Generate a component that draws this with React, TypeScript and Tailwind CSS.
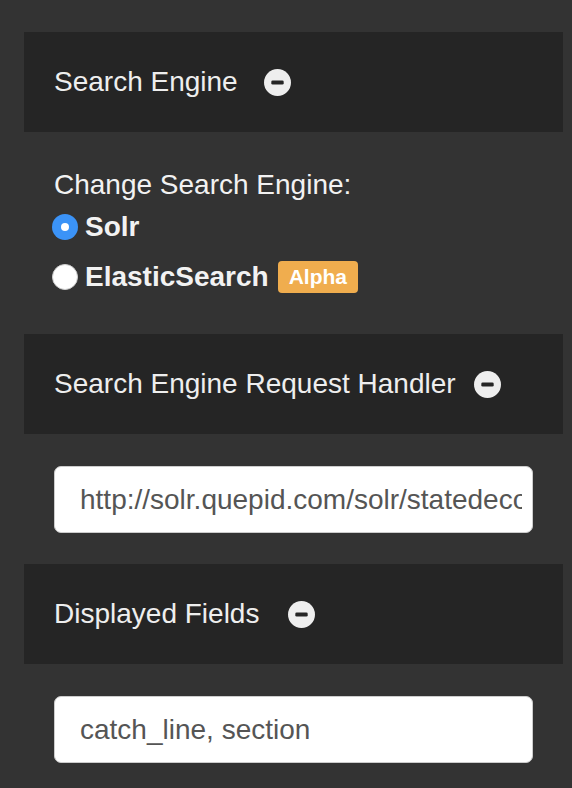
import React from 'react';

function MinusCircle() {
  return (
    <svg width="27" height="27" viewBox="0 0 24 24" className="shrink-0">
      <circle cx="12" cy="12" r="12" fill="#eeeeee" />
      <rect x="6.5" y="10.2" width="11" height="3.6" rx="1.2" fill="#252525" />
    </svg>
  );
}

function PanelHeader({ title, gap }: { title: string; gap: string }) {
  return (
    <div className="h-[100px] bg-[#252525] pl-[30px] flex items-center">
      <span className="text-[28px] text-[#eeeeee]">{title}</span>
      <span className={gap}>
        <MinusCircle />
      </span>
    </div>
  );
}

function Radio({ checked }: { checked: boolean }) {
  if (checked) {
    return (
      <span className="w-[26px] h-[26px] rounded-full bg-[#3b93f7] flex items-center justify-center shrink-0">
        <span className="w-[8px] h-[8px] rounded-full bg-white" />
      </span>
    );
  }
  return <span className="w-[26px] h-[26px] rounded-full bg-white border border-[#cfcfcf] shrink-0" />;
}

function TextField({ value }: { value: string }) {
  return (
    <input
      type="text"
      readOnly
      value={value}
      className="block w-full h-[67px] rounded-[7px] bg-white border border-[#cccccc] pl-[25px] pr-[10px] text-[28px] text-[#555555] outline-none"
      style={{ fontFamily: '"Liberation Sans", Arial, sans-serif' }}
    />
  );
}

export default function App() {
  const [engine, setEngine] = React.useState('solr');

  return (
    <div
      className="min-h-[788px] w-[572px] bg-[#333333] pt-[32px] pl-[24px] pr-[9px] overflow-hidden"
      style={{ fontFamily: '"Liberation Sans", Arial, sans-serif' }}
    >
      <PanelHeader title="Search Engine" gap="ml-[26px]" />
      <div className="pl-[30px] pr-[30px] pt-[38px] pb-[41px] text-[#f2f2f2]">
        <div className="text-[28px] leading-[30px]">Change Search Engine:</div>
        <label className="flex items-center -ml-[2px] mt-[12px] h-[30px] cursor-pointer" onClick={() => setEngine('solr')}>
          <Radio checked={engine === 'solr'} />
          <span className="ml-[7px] text-[28px] font-bold">Solr</span>
        </label>
        <label className="flex items-center -ml-[2px] mt-[19px] h-[32px] cursor-pointer" onClick={() => setEngine('es')}>
          <Radio checked={engine === 'es'} />
          <span className="ml-[7px] text-[28px] font-bold">ElasticSearch</span>
          <span className="ml-[9px] h-[32px] px-[11px] rounded-[4px] bg-[#f0ad4e] text-white text-[21px] font-bold flex items-center">
            Alpha
          </span>
        </label>
      </div>

      <PanelHeader title="Search Engine Request Handler" gap="ml-[18px]" />
      <div className="pl-[30px] pr-[30px] pt-[32px] pb-[31px]">
        <TextField value="http://solr.quepid.com/solr/statedecoded/select" />
      </div>

      <PanelHeader title="Displayed Fields" gap="ml-[29px]" />
      <div className="pl-[30px] pr-[30px] pt-[32px] pb-[31px]">
        <TextField value="catch_line, section" />
      </div>
    </div>
  );
}
